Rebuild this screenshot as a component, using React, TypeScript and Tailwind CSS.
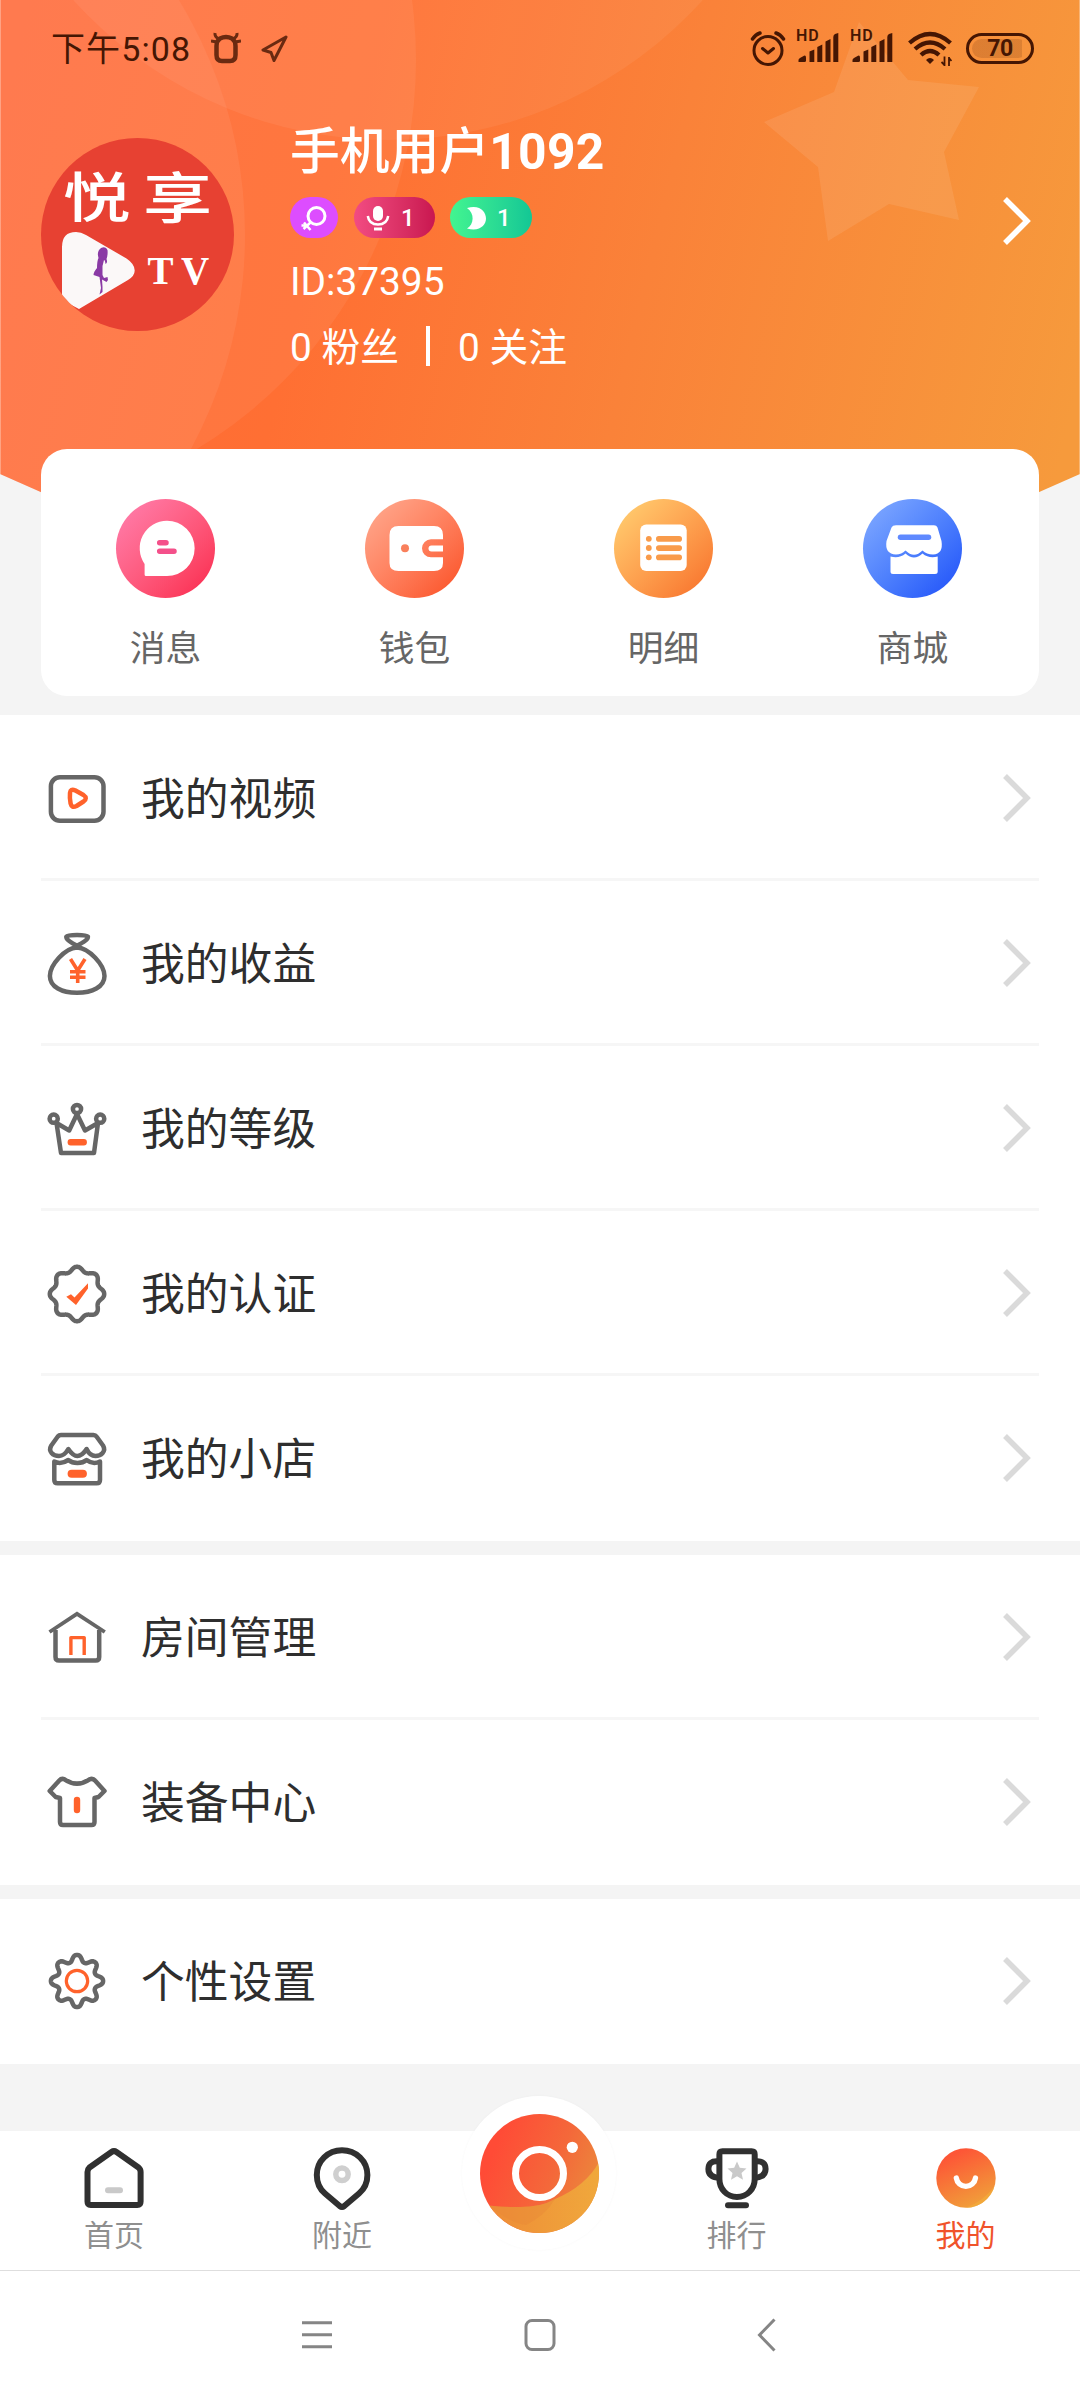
import React from "react";
import { clsx } from "clsx";

// Closed outline whose radius swings eight times around the centre
const wavyOutline = (
  cx: number,
  cy: number,
  radius: number,
  swing: number,
  sharpness: number
) => {
  const points: string[] = [];
  for (let i = 0; i < 240; i++) {
    const a = (i / 240) * Math.PI * 2;
    const wave = Math.tanh(sharpness * Math.cos(a * 8)) / Math.tanh(sharpness);
    const r = radius + swing * wave;
    points.push(
      `${(cx + r * Math.cos(a)).toFixed(2)} ${(cy + r * Math.sin(a)).toFixed(2)}`
    );
  }
  return `M${points.join("L")}Z`;
};

const BADGE_PATH = wavyOutline(32, 32, 25, 2.2, 0.6);
const GEAR_PATH = wavyOutline(32, 31, 22.8, 3.3, 1);

const LineIcon = ({ children }: { children: React.ReactNode }) => (
  <svg
    viewBox="0 0 64 64"
    fill="none"
    stroke="#666"
    strokeWidth="4.5"
    strokeLinejoin="round"
    className="size-16 shrink-0"
  >
    {children}
  </svg>
);

const VideoIcon = () => (
  <LineIcon>
    <rect x="5.9" y="10.2" width="52.6" height="43.6" rx="9" />
    <path
      d="M25 26Q25.5 21.5 30 23.3L38.5 28Q43 31 38.5 34.5L31.5 39Q26.7 41.5 25.6 36.5Q24.5 31 25 26Z"
      stroke="#ff622b"
    />
  </LineIcon>
);

const MoneyBagIcon = () => (
  <LineIcon>
    <path d="M32 13.8C26 10.5 21 7.5 21.3 4.7C23 2.3 41 2.3 42.9 4.7C43.2 7.5 38 10.5 32 13.8Z" />
    <path d="M32 15.5C20 16 4.9 33 4.9 44C4.9 55 17 60.8 32 60.8C47 60.8 59.5 55 59.5 44C59.5 33 44 16 32 15.5Z" />
    <path
      d="M25.5 27L32.7 38.5L40 27M32.7 38V51M25 39.8h15.5M25 45.3h15.5"
      stroke="#ff622b"
      strokeWidth="3.6"
    />
  </LineIcon>
);

const CrownIcon = () => (
  <LineIcon>
    <circle cx="8.7" cy="21.7" r="4.1" />
    <circle cx="32" cy="12" r="4.1" />
    <circle cx="55.2" cy="21.7" r="4.1" />
    <path d="M11.5 26L16 56H49L53 26L40 33.5L32 17L24.2 33.5L11.5 26" />
    <rect x="22.6" y="42" width="19.3" height="6.4" rx="3" fill="#ff622b" stroke="none" />
  </LineIcon>
);

const VerifiedIcon = () => (
  <LineIcon>
    <path d={BADGE_PATH} />
    <path
      d="M21.3 34.7L26 32.3L29.5 35.5L43 21.3V26.5L31 43Z"
      fill="#ff622b"
      stroke="none"
    />
  </LineIcon>
);

const StoreIcon = () => (
  <LineIcon>
    <path d="M16 8H48.5Q50.5 8 51.5 9.5L58 18.5C61.5 24.5 56 29 50.5 29C46 29 43.5 26 41.6 22C39 26 36 29 32.3 29C28.5 29 26 26 23.3 22C21 26 18 29 14 29C8 29 2.8 24.5 6.3 18.5L12.8 9.5Q14 8 16 8Z" />
    <path d="M9.3 34.5V53Q9.3 56.3 12.6 56.3H51.7Q55 56.3 55 53V34.5C50 37 46 36.5 41.6 33C37 37 28 37 23.3 33C18 36.5 14 37 9.3 34.5Z" />
    <rect x="22.6" y="42.7" width="19.3" height="8" rx="4" fill="#ff622b" stroke="none" />
  </LineIcon>
);

const RoomIcon = () => (
  <LineIcon>
    <path d="M4.5 26L32 7.8L59.8 26" strokeWidth="3.8" strokeLinejoin="miter" />
    <path d="M10.5 24V51Q10.5 54.5 14 54.5H50.7Q54.2 54.5 54.2 51V24" />
    <path d="M25.9 49V31.6H39.2V49" stroke="#ff622b" strokeWidth="3.4" />
  </LineIcon>
);

const ShirtIcon = () => (
  <LineIcon>
    <path d="M19.5 8.3Q32 17 44.5 8.3Q48 7 50 9.5L59.5 20L53.5 26L49.5 27V51Q49.5 54 46.5 54H18Q15 54 15 51V27L10.7 26L4.7 20L14.3 9.5Q16.5 7 19.5 8.3Z" />
    <rect x="28.8" y="25.7" width="6.4" height="16.6" rx="3.2" fill="#ff622b" stroke="none" />
  </LineIcon>
);

const GearIcon = () => (
  <LineIcon>
    <path d={GEAR_PATH} />
    <circle cx="32" cy="31" r="10.7" stroke="#ff622b" strokeWidth="3.2" />
  </LineIcon>
);

const Chevron = ({ className }: { className?: string }) => (
  <svg
    viewBox="0 0 30 48"
    fill="none"
    stroke="currentColor"
    strokeWidth="5.5"
    className={clsx("h-12 w-[30px] shrink-0", className)}
  >
    <path d="M3 2L25 24L3 46" />
  </svg>
);

const SignalIcon = () => (
  <div className="relative h-9 w-[42px]">
    <span className="absolute -left-0.5 -top-[3px] text-[16px] leading-[18px] font-semibold tracking-[0.8px]">
      HD
    </span>
    <svg viewBox="0 0 42 36" fill="currentColor" className="size-full">
      <path d="M0.500 32V30Q0.500 29 2 28L6 25.700Q8 25 8 27.500V30.500Q8 32 6.500 32Z" />
      <path d="M11.500 21.500L16.300 19.500V32H11.500ZM19.300 17L24.300 14.500V32H19.300ZM27.500 11.500L32.500 9V32H27.500ZM35.300 7Q35.300 5 37 4L40.300 3V32H35.300Z" />
    </svg>
  </div>
);

const StatusBar = () => (
  <div className="flex h-24 shrink-0 items-center pl-[51px] pr-[46px] text-[#451603]">
    <span className="w-[160px] pt-px text-[34px] leading-10 tracking-[1.1px] whitespace-nowrap">
      下午5:08
    </span>
    <svg
      viewBox="0 0 30 32"
      fill="none"
      stroke="currentColor"
      strokeWidth="4.5"
      className="h-8 w-[30px] opacity-80"
    >
      <path d="M9 6.500Q15 3.500 21 6.500Q24.500 9 24.500 14V23Q24.500 29 19 29H11Q5.500 29 5.500 23V14Q5.500 9 9 6.500Z" />
      <path d="M4 1Q3.500 5 8 7M26 1Q26.500 5 22 7" strokeWidth="3" />
      <path d="M0 9L6 10M30 9L24 10" strokeWidth="3" />
    </svg>
    <svg
      viewBox="0 0 30 32"
      fill="none"
      stroke="currentColor"
      strokeWidth="3"
      strokeLinejoin="round"
      className="ml-[19px] h-8 w-[30px] opacity-80"
    >
      <path d="M26 5L3 18L11 20.5L14 28.5Z" />
    </svg>

    <div className="ml-auto flex items-center">
      <svg
        viewBox="0 0 36 36"
        fill="none"
        stroke="currentColor"
        strokeWidth="3"
        strokeLinecap="round"
        strokeLinejoin="round"
        className="size-9"
      >
        <circle cx="18" cy="20.5" r="14" />
        <path d="M12.5 18.5L18 23L23.500 18.500" />
        <path d="M2.500 9Q5.500 4.500 10 3M33.500 9Q30.500 4.500 26 3" strokeWidth="3.500" />
      </svg>
      <div className="ml-3 flex gap-3">
        <SignalIcon />
        <SignalIcon />
      </div>
      <svg
        viewBox="0 0 44 36"
        fill="none"
        stroke="currentColor"
        strokeWidth="4.3"
        className="ml-3.5 h-9 w-11"
      >
        <path d="M1.5 13Q22 -5 42.5 13" />
        <path d="M7 19Q22 6 37 19" />
        <path d="M13 25Q22 17 31 25" />
        <path d="M22 34L18 30Q22 26 26 30Z" fill="currentColor" stroke="none" />
        <path d="M36.500 26.500V36M36.500 35L33.500 32M41 36V27M41 28L43.500 31" strokeWidth="1.800" />
      </svg>
      <div className="ml-3.5 flex h-[31px] w-[68px] items-center justify-center rounded-full border-[3px] border-current p-[3px]">
        <span className="flex h-full w-full items-center justify-center rounded-full bg-linear-to-r from-[#45160326] from-90% to-transparent to-90% text-[23px] leading-none font-bold tracking-[-0.5px]">
          70
        </span>
      </div>
    </div>
  </div>
);

const HeaderBackdrop = () => (
  <svg viewBox="0 0 1080 520" className="absolute inset-x-0 top-0 h-[520px] w-full">
    <defs>
      <linearGradient id="header" gradientUnits="userSpaceOnUse" x1="0" y1="120" x2="1080" y2="380">
        <stop offset="0" stopColor="#ff6a39" />
        <stop offset="0.3" stopColor="#ff6f33" />
        <stop offset="0.6" stopColor="#fa8239" />
        <stop offset="1" stopColor="#f69a3c" />
      </linearGradient>
      <clipPath id="headerShape">
        <path d="M0 0H1080V474L976 520H104L0 474Z" />
      </clipPath>
    </defs>
    <g clipPath="url(#headerShape)">
      <rect width="1080" height="520" fill="url(#header)" />
      <g fill="#fff" fillOpacity="0.06">
        <circle cx="388" cy="-284" r="424" />
        <circle cx="-206" cy="235" r="451" />
        <circle cx="-39" cy="60" r="455" />
        <path
          fillOpacity="0.09"
          d="M859 22L908 80L979 87L944 152L959 220L889 204L828 241L818 167L764 122L834 92Z"
        />
      </g>
      <path d="M0.5 0V520M1079.5 0V520" stroke="#fff" strokeOpacity="0.3" />
    </g>
  </svg>
);

const Avatar = () => (
  <svg viewBox="0 0 193 193" className="mt-[42px] size-[193px] shrink-0">
    <defs>
      <clipPath id="avatar">
        <circle cx="96.5" cy="96.5" r="96.5" />
      </clipPath>
    </defs>
    <g clipPath="url(#avatar)">
      <rect width="193" height="193" fill="#e74132" />
      <g
        fill="#fff"
        fontSize="54"
        fontWeight="500"
        fontFamily="'Noto Sans CJK SC', sans-serif"
      >
        <text transform="translate(22 80) scale(1.25 1)">悦</text>
        <text transform="translate(102 80) scale(1.28 1.02)">享</text>
      </g>
      <path
        d="M21 109Q21 94 35 94Q40 94 45 97L85.5 120.5Q93.7 126 93.7 132.5Q93.7 138 87 142L38 171L21 162Z"
        fill="#fbf8f8"
      />
      <path
        d="M60 110Q65 108 66.5 112Q67 117 65.5 121Q67 125 64.5 126Q64 122 63 122L61.5 128L61.5 137L63 140L66.5 139L67 142L65.5 144L61 141.5L61.5 149L61.5 154L58.5 156.5L60 150L58.500 139L52.500 137Q52.500 134 56 130Q56 123 57.500 120Q56 115 58 112Z"
        fill="#8a3aa5"
      />
      <g
        fill="#fff"
        fontSize="39"
        fontWeight="700"
        fontFamily="'Liberation Serif', serif"
      >
        <text x="106.5" y="145.5">T</text>
        <text x="140" y="145.5">V</text>
      </g>
    </g>
  </svg>
);

const Badges = () => (
  <div className="mt-[15px] flex gap-4 text-white">
    <span className="flex h-[41px] w-12 items-center justify-center rounded-full bg-[#dd4dff]">
      <svg viewBox="0 0 28 28" fill="none" stroke="currentColor" strokeWidth="3" className="size-7">
        <circle cx="16.5" cy="12" r="8.5" />
        <path d="M11 18L3.500 25M4 18.500L10.500 26M1.500 21.500H8" strokeWidth="2.500" />
      </svg>
    </span>
    <span className="flex h-[41px] w-[81px] items-center rounded-full bg-linear-to-r from-[#f24b82] to-[#c91650] pl-3 text-[24px] leading-none font-medium">
      <svg viewBox="0 0 24 28" fill="none" stroke="currentColor" strokeWidth="2.5" className="h-7 w-6">
        <rect x="7" y="2" width="10" height="15" rx="5" fill="currentColor" stroke="none" />
        <path d="M1.8 12Q3 20.5 12 20.5T22.2 12" />
        <path d="M8 25H16" strokeWidth="3" />
      </svg>
      <span className="ml-[11px]">1</span>
    </span>
    <span className="-ml-px flex h-[41px] w-[82px] items-center rounded-full bg-linear-to-r from-[#42f590] to-[#12c795] pl-3.5 text-[24px] leading-none font-medium">
      <svg viewBox="0 0 24 28" fill="currentColor" className="h-7 w-6">
        <path d="M3 4C16 0 22 8 22 14.500S16 28 3 24.500C10 20.500 11 9.500 3 4Z" />
      </svg>
      <span className="ml-[9px]">1</span>
    </span>
  </div>
);

const Profile = () => (
  <div className="flex h-[353px] shrink-0 pl-[41px] pr-12 text-white">
    <Avatar />
    <div className="ml-[56px] pt-[26px]">
      <h1 className="text-[49.8px] leading-[60px] font-bold whitespace-nowrap">
        <span className="font-medium">手机用户</span>
        <span className="tracking-[0.3px]">1092</span>
      </h1>
      <Badges />
      <p className="mt-6 text-[38.8px] leading-10">ID:37395</p>
      <div className="mt-[26px] flex items-center text-[38.8px] leading-10">
        <span>0 粉丝</span>
        <span className="mr-7 ml-[27px] -mt-1 h-10 w-1 bg-white" />
        <span>0 关注</span>
      </div>
    </div>
    <Chevron className="mt-[101px] ml-auto" />
  </div>
);

const shortcuts = [
  {
    label: "消息",
    background: "bg-linear-to-br from-[#ff80b0] to-[#fa1f4a]",
    glyph: (
      <>
        <path
          d="M51 21.7A27.6 27.6 0 0 1 51 77H30Q28.6 77 28.6 75.5V65A27.6 27.6 0 0 1 51 21.7Z"
          fill="#fff"
        />
        <path d="M43.7 43.7H50M43.7 52.3H58" stroke="#f4508a" strokeWidth="5.5" strokeLinecap="round" />
      </>
    ),
  },
  {
    label: "钱包",
    background: "bg-linear-to-br from-[#ffac92] to-[#fa4b1a]",
    glyph: (
      <>
        <path
          d="M33.5 27H69Q78 27 78 36V40.3H66A9 9 0 0 0 66 58.3H78V64Q78 72 69 72H33.5Q24.5 72 24.5 64V36Q24.5 27 33.5 27Z"
          fill="#fff"
        />
        <path d="M78 46.5H66.5A3 3 0 0 0 66.5 52.5H78Z" fill="#fff" />
        <circle cx="40" cy="49.3" r="4" fill="#f9805c" />
      </>
    ),
  },
  {
    label: "明细",
    background: "bg-linear-to-br from-[#ffd374] to-[#f66c26]",
    glyph: (
      <>
        <rect x="26.2" y="25.5" width="46.5" height="46.5" rx="6" fill="#fff" />
        <g fill="#f99b4a">
          <circle cx="34.8" cy="39.8" r="2.9" />
          <circle cx="34.8" cy="49" r="2.9" />
          <circle cx="34.8" cy="58.3" r="2.9" />
          <rect x="42" y="37" width="26" height="5.7" rx="2.8" />
          <rect x="42" y="46.2" width="26" height="5.7" rx="2.8" />
          <rect x="42" y="55.5" width="26" height="5.7" rx="2.8" />
        </g>
      </>
    ),
  },
  {
    label: "商城",
    background: "bg-linear-to-br from-[#86adff] to-[#1f4bf8]",
    glyph: (
      <>
        <path
          d="M33 26.3H71Q73.5 26.3 74.5 28.5L78.5 42Q80.5 55 70 55.5Q63.5 55.5 59.5 51.5Q51 60 42.5 51.5Q38.5 55.5 33 55.5Q21.5 55 23.5 42L28.5 28.5Q29.5 26.3 33 26.3Z"
          fill="#fff"
        />
        <path
          d="M27.5 57.5Q36 60 42.5 54.5Q51 62.5 59.5 54.5Q66 60 74.7 57.5V72.5Q74.7 75 72 75H30Q27.5 75 27.5 72.5Z"
          fill="#fff"
        />
        <path d="M37.5 38.2H65.5" stroke="#5f89ff" strokeWidth="5.5" strokeLinecap="round" />
      </>
    ),
  },
];

const ShortcutCard = () => (
  <div className="mx-[41px] grid h-[247px] shrink-0 grid-cols-4 rounded-[26px] bg-white pt-[50px] pr-0.5">
    {shortcuts.map((item) => (
      <div key={item.label} className="flex flex-col items-center">
        <svg viewBox="0 0 99 99" fill="none" className={clsx("size-[99px] rounded-full", item.background)}>
          {item.glyph}
        </svg>
        <span className="mt-[31px] text-[35.75px] leading-10 text-[#666]">{item.label}</span>
      </div>
    ))}
  </div>
);

const menuGroups = [
  [
    { label: "我的视频", icon: <VideoIcon /> },
    { label: "我的收益", icon: <MoneyBagIcon /> },
    { label: "我的等级", icon: <CrownIcon /> },
    { label: "我的认证", icon: <VerifiedIcon /> },
    { label: "我的小店", icon: <StoreIcon /> },
  ],
  [
    { label: "房间管理", icon: <RoomIcon /> },
    { label: "装备中心", icon: <ShirtIcon /> },
  ],
  [{ label: "个性设置", icon: <GearIcon /> }],
];

const Menu = () => (
  <div className="flex shrink-0 flex-col gap-3.5">
    {menuGroups.map((group) => (
      <div key={group[0].label} className="bg-white px-[41px] first:pt-px">
        {group.map((item, i) => (
          <div
            key={item.label}
            className={clsx(
              "flex h-[165px] items-center border-b-3 pl-1 pr-[7px]",
              i < group.length - 1 ? "border-[#f6f6f6]" : "border-transparent"
            )}
          >
            <span className="pt-[3px]">{item.icon}</span>
            <span className="ml-8 pt-1.5 text-[43.8px] leading-[60px] text-[#2e2e2e]">
              {item.label}
            </span>
            <Chevron className="mt-px ml-auto text-[#dadada]" />
          </div>
        ))}
      </div>
    ))}
  </div>
);

const Tab = ({
  label,
  active,
  children,
}: {
  label: string;
  active?: boolean;
  children: React.ReactNode;
}) => (
  <div className="flex flex-1 flex-col items-center pt-[15px]">
    <svg
      viewBox="0 0 64 64"
      fill="none"
      stroke="#303030"
      strokeWidth="6"
      strokeLinejoin="round"
      className="size-16"
    >
      {children}
    </svg>
    <span
      className={clsx(
        "mt-2 text-[30px] leading-9",
        active ? "text-[#f0532b]" : "text-[#8f8f8f]"
      )}
    >
      {label}
    </span>
  </div>
);

const CameraButton = () => (
  <div className="-mt-[35px] flex size-[154px] shrink-0 items-center justify-center rounded-full bg-white shadow-[0_0_3px_#00000008]">
    <svg viewBox="0 0 119 119" className="size-[119px]">
      <defs>
        <linearGradient id="camera" x1="0" y1="0.3" x2="1" y2="0.7">
          <stop offset="0.1" stopColor="#ff4b36" />
          <stop offset="0.6" stopColor="#f4683a" />
          <stop offset="1" stopColor="#ea8c3c" />
        </linearGradient>
        <linearGradient id="cameraWave" x1="0" y1="0" x2="1" y2="0">
          <stop offset="0" stopColor="#ee8a36" />
          <stop offset="1" stopColor="#f0a83c" />
        </linearGradient>
        <clipPath id="cameraDisc">
          <circle cx="59.5" cy="59.5" r="59.5" />
        </clipPath>
      </defs>
      <g clipPath="url(#cameraDisc)">
        <rect width="119" height="119" fill="url(#camera)" />
        <path d="M0 90Q14 93 35 93Q60 94 75 85Q106 72 119 48V119H0Z" fill="url(#cameraWave)" />
        <path d="M35 93Q60 94 75 85Q66 101 46 111Q30 109 10 92Z" fill="#e98638" fillOpacity="0.4" />
      </g>
      <circle cx="59.5" cy="59.5" r="24" fill="none" stroke="#fff" strokeWidth="7" />
      <circle cx="92.3" cy="33.3" r="5.6" fill="#fff" />
    </svg>
  </div>
);

const TabBar = () => (
  <div className="mt-auto flex h-[139px] shrink-0 bg-white">
    <div className="flex w-[456px]">
      <Tab label="首页">
        <path d="M29.5 6Q32 4.3 34.5 6L56.5 21.5Q58.6 23.3 58.6 26V55.5Q58.6 59 55.3 59H8.7Q5.5 59 5.5 55.5V26Q5.5 23.3 7.5 21.5Z" />
        <path d="M26 44.2H38" stroke="#c9c9c9" strokeLinecap="round" />
      </Tab>
      <Tab label="附近">
        <path d="M34.3 60Q32 61.7 29.7 60L15 47.5C8.5 42 6.8 35 6.8 29C6.8 15 18 4.2 32 4.2S57.4 15 57.4 29C57.4 35 55.5 42 49 47.5Z" />
        <circle cx="32" cy="28.3" r="6.2" stroke="#cfcfcf" strokeWidth="5.5" />
      </Tab>
    </div>
    <div className="flex flex-1 justify-center">
      <CameraButton />
    </div>
    <div className="flex w-[458px]">
      <Tab label="排行">
        <path d="M17.5 5.2H46.6Q49.7 5.2 49.7 8.5V33C49.7 43 42 51 32 51S14.4 43 14.4 33V8.5Q14.4 5.2 17.5 5.2Z" />
        <path d="M14 15.5C6 14.5 3.4 18 3.4 23S6.5 31.5 15 32M50 15.5C58 14.5 60.6 18 60.6 23S57.5 31.5 49 32" />
        <path d="M23 59.3H41" strokeLinecap="round" />
        <path
          d="M32 15.5L34.8 21.8L41.5 22.5L36.5 27L38 33.7L32 30.2L26 33.7L27.5 27L22.5 22.5L29.2 21.8Z"
          fill="#c9c9c9"
          stroke="none"
        />
      </Tab>
      <Tab label="我的" active>
        <defs>
          <linearGradient id="mine" x1="0.25" y1="0" x2="0.7" y2="1">
            <stop offset="0.1" stopColor="#fd5636" />
            <stop offset="1" stopColor="#f0a23a" />
          </linearGradient>
        </defs>
        <circle cx="32" cy="32" r="29.7" fill="url(#mine)" stroke="none" />
        <path d="M32 61.7Q50 55 60.5 40A29.7 29.7 0 0 1 32 61.7Z" fill="#f2ac3b" fillOpacity="0.7" stroke="none" />
        <path d="M22.3 32A9.7 9.7 0 0 0 41.5 32" stroke="#fff" strokeWidth="5.3" strokeLinecap="round" />
      </Tab>
    </div>
  </div>
);

const SystemNav = () => (
  <div className="flex h-[130px] shrink-0 items-start justify-center gap-[191px] border-t border-[#dedede] bg-white pt-[46px]">
    <svg viewBox="0 0 34 36" fill="none" stroke="#858585" strokeWidth="3" className="h-9 w-[34px]">
      <path d="M4 5.700H34M4 17.700H34M4 29.700H34" />
    </svg>
    <svg viewBox="0 0 34 36" fill="none" stroke="#858585" strokeWidth="3" className="h-9 w-[34px]">
      <rect x="3" y="3.5" width="28" height="29" rx="6" />
    </svg>
    <svg viewBox="0 0 34 36" fill="none" stroke="#858585" strokeWidth="3" className="h-9 w-[34px]">
      <path d="M26.5 2.5L11.5 18L26.5 33.5" />
    </svg>
  </div>
);

export default function App() {
  return (
    <div className="flex h-[2400px] w-[1080px] flex-col overflow-hidden bg-[#f4f4f4] font-['Roboto','Noto_Sans_CJK_SC',sans-serif]">
      <div className="relative h-[715px] shrink-0">
        <HeaderBackdrop />
        <div className="relative flex flex-col">
          <StatusBar />
          <Profile />
          <ShortcutCard />
        </div>
      </div>
      <Menu />
      <TabBar />
      <SystemNav />
    </div>
  );
}
